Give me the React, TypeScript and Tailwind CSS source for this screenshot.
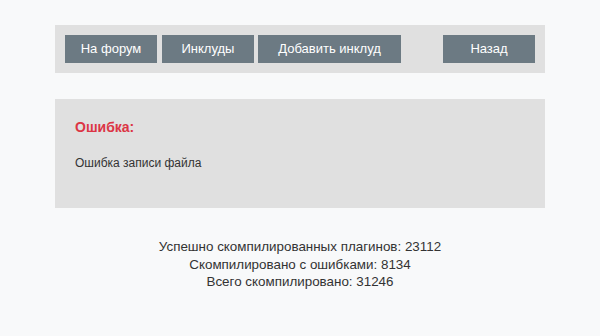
import React from "react";

const btn =
  "h-[28px] bg-[#6c7a83] text-white text-[13px] flex items-center justify-center";

export default function App() {
  return (
    <div
      className="min-h-[336px] bg-[#f8f9fa] pt-[25px]"
      style={{ fontFamily: '"Liberation Sans", Arial, sans-serif' }}
    >
      <div className="mx-auto w-[490px]">
        <div className="bg-[#e0e0e0] p-[10px] flex">
          <a className={btn + " w-[92px]"}>На форум</a>
          <a className={btn + " w-[92px] ml-[5px]"}>Инклуды</a>
          <a className={btn + " w-[143px] ml-[4px]"}>Добавить инклуд</a>
          <a className={btn + " w-[92px] ml-auto"}>Назад</a>
        </div>
        <div className="mt-[26px] bg-[#e0e0e0] h-[109px] px-[20px] pt-[20px]">
          <div className="text-[14px] leading-[17px] font-bold text-[#dc3545]">Ошибка:</div>
          <div className="mt-[19px] text-[12px] leading-[16px] text-[#333]">Ошибка записи файла</div>
        </div>
        <div className="mt-[30px] text-center text-[13.4px] leading-[17.5px] text-[#333]">
          <div>Успешно скомпилированных плагинов: 23112</div>
          <div>Скомпилировано с ошибками: 8134</div>
          <div>Всего скомпилировано: 31246</div>
        </div>
      </div>
    </div>
  );
}
